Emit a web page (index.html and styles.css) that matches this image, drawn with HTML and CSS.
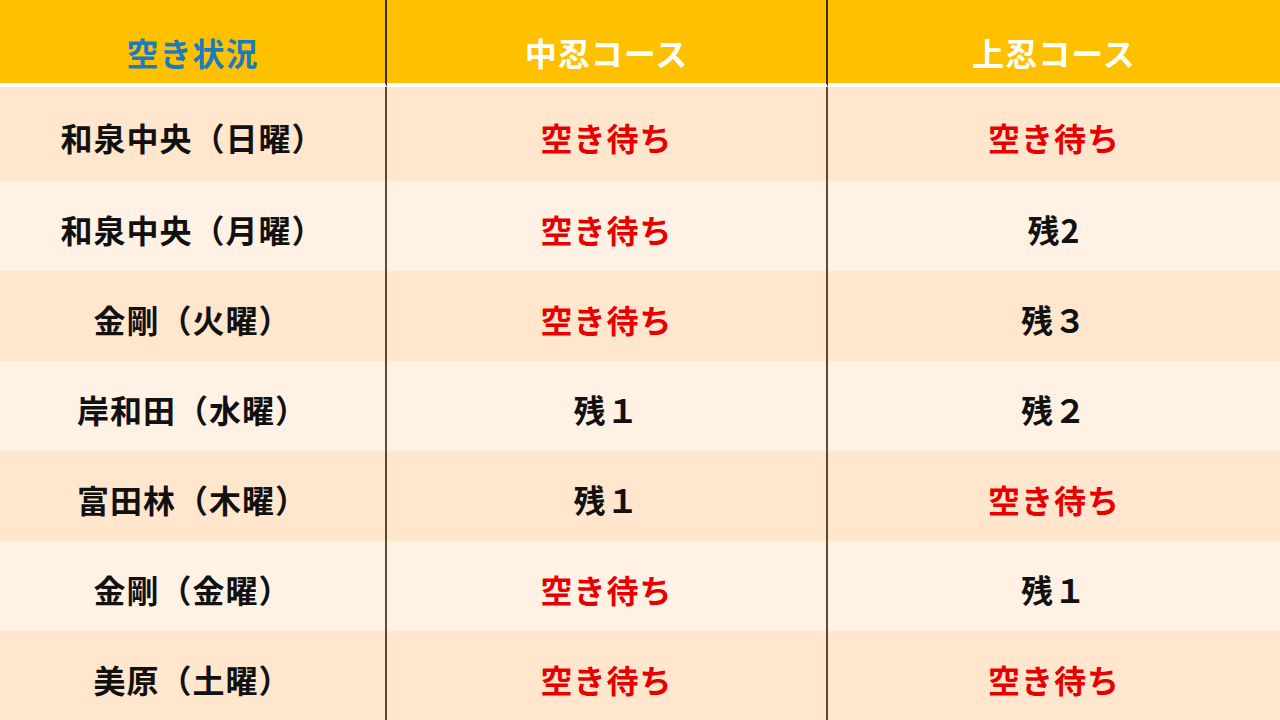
FILE: index.html
```html
<!DOCTYPE html>
<html lang="ja">
<head>
<meta charset="utf-8">
<link rel="stylesheet" href="styles.css">
</head>
<body>
<div class="table">
  <div class="cell head c1 label">空き状況</div>
  <div class="cell head c2">中忍コース</div>
  <div class="cell head c3">上忍コース</div>

  <div class="cell odd c1">和泉中央（日曜）</div>
  <div class="cell odd c2 red">空き待ち</div>
  <div class="cell odd c3 red">空き待ち</div>

  <div class="cell even c1">和泉中央（月曜）</div>
  <div class="cell even c2 red">空き待ち</div>
  <div class="cell even c3">残2</div>

  <div class="cell odd c1">金剛（火曜）</div>
  <div class="cell odd c2 red">空き待ち</div>
  <div class="cell odd c3">残３</div>

  <div class="cell even c1">岸和田（水曜）</div>
  <div class="cell even c2">残１</div>
  <div class="cell even c3">残２</div>

  <div class="cell odd c1">富田林（木曜）</div>
  <div class="cell odd c2">残１</div>
  <div class="cell odd c3 red">空き待ち</div>

  <div class="cell even c1">金剛（金曜）</div>
  <div class="cell even c2 red">空き待ち</div>
  <div class="cell even c3">残１</div>

  <div class="cell odd c1">美原（土曜）</div>
  <div class="cell odd c2 red">空き待ち</div>
  <div class="cell odd c3 red">空き待ち</div>
</div>
</body>
</html>
```
FILE: styles.css
```css
html, body {
  margin: 0;
  padding: 0;
  background: #ffffff;
}
body {
  width: 1280px;
  height: 720px;
  overflow: hidden;
  font-family: "Noto Sans CJK JP", "Noto Sans", sans-serif;
}
.table {
  display: grid;
  grid-template-columns: 387px 441px 452px;
  grid-template-rows: 87px 94px 90px 90px 90px 90px 90px 89px;
}
.cell {
  display: flex;
  align-items: center;
  justify-content: center;
  font-size: 32px;
  font-weight: 700;
  letter-spacing: 1px;
  color: #111111;
  box-sizing: border-box;
  padding-top: 6px;
  white-space: nowrap;
}
.head {
  background: #ffc000;
  color: #ffffff;
  padding-top: 20px;
  border-bottom: 4px solid #ffffff;
}
.head.label {
  color: #1a7bbf;
}
.odd {
  background: #ffe6cc;
}
.even {
  background: #fff2e5;
}
.c1, .c2 {
  border-right: 2px solid #5a4a3a;
}
.head.c1, .head.c2 {
  border-right-color: #3a2e1e;
}
.red {
  color: #e60000;
}
```
